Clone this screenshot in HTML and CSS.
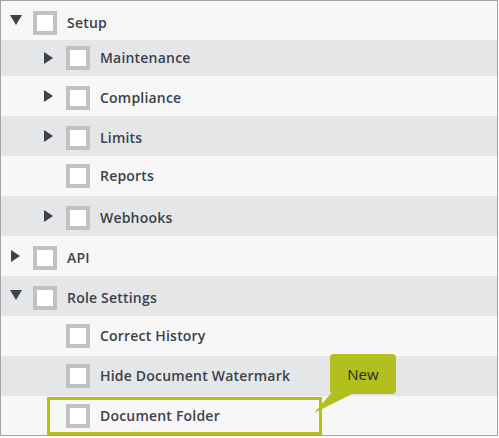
FILE: index.html
```html
<!DOCTYPE html>
<html lang="en">
<head>
<meta charset="utf-8">
<title>Permissions tree</title>
<link rel="stylesheet" href="styles.css">
</head>
<body>
<div class="tree">
  <div class="row top has-toggle">
    <span class="toggle open"></span><span class="check"></span><span class="label">Setup</span>
  </div>
  <div class="row alt lvl1 compact">
    <span class="toggle closed"></span><span class="check"></span><span class="label">Maintenance</span>
  </div>
  <div class="row lvl1 has-toggle">
    <span class="toggle closed"></span><span class="check"></span><span class="label">Compliance</span>
  </div>
  <div class="row alt lvl1 has-toggle">
    <span class="toggle closed"></span><span class="check"></span><span class="label">Limits</span>
  </div>
  <div class="row lvl1">
    <span class="toggle"></span><span class="check"></span><span class="label">Reports</span>
  </div>
  <div class="row alt lvl1 has-toggle">
    <span class="toggle closed"></span><span class="check"></span><span class="label">Webhooks</span>
  </div>
  <div class="row has-toggle">
    <span class="toggle closed"></span><span class="check"></span><span class="label">API</span>
  </div>
  <div class="row alt has-toggle">
    <span class="toggle open"></span><span class="check"></span><span class="label">Role Settings</span>
  </div>
  <div class="row lvl1">
    <span class="toggle"></span><span class="check"></span><span class="label">Correct History</span>
  </div>
  <div class="row alt lvl1">
    <span class="toggle"></span><span class="check"></span><span class="label">Hide Document Watermark</span>
  </div>
  <div class="row lvl1 bottom">
    <span class="toggle"></span><span class="check"></span><span class="label">Document Folder</span>
    <span class="highlight"></span>
  </div>
  <div class="callout">New</div>
</div>
</body>
</html>
```

FILE: styles.css
```css
* { box-sizing: border-box; }

html, body {
  margin: 0;
  background: #ffffff;
}

.tree {
  position: relative;
  width: 498px;
  border: 1px solid #a3a3a3;
  background: #f7f7f7;
  font-family: "Open Sans", "Liberation Sans", sans-serif;
}

.row {
  position: relative;
  display: flex;
  align-items: center;
  height: 40px;
  padding-left: 9px;
  background: #f7f7f7;
}

.row.alt { background: #e5e6e7; }
.row.top { height: 39px; }
.row.compact { height: 36px; }
.row.bottom { height: 39px; }
.row.lvl1 { padding-left: 42px; }
.row.has-toggle { padding-top: 4px; }

/* expand / collapse arrow slot; empty for leaf nodes */
.toggle {
  flex: 0 0 23px;
  height: 12px;
  position: relative;
}

.toggle.open::before,
.toggle.closed::before {
  content: "";
  position: absolute;
  left: 0;
  top: 0;
  width: 0;
  height: 0;
  border-style: solid;
}

.toggle.open { margin-bottom: 6px; }
.toggle.open::before {
  top: 1px;
  border-width: 10px 6px 0 6px;
  border-color: #3c424b transparent transparent transparent;
}

.toggle.closed { margin-bottom: 4px; }
.row.compact .toggle.closed { margin-bottom: 0; }
.toggle.closed::before {
  left: 1px;
  border-width: 6px 0 6px 9px;
  border-color: transparent transparent transparent #3c424b;
}

.check {
  flex: 0 0 24px;
  width: 24px;
  height: 24px;
  border: 4px solid #c1c1c3;
  background: #ffffff;
  margin-right: 10px;
}

.label {
  font-size: 14px;
  font-weight: 600;
  letter-spacing: 0.2px;
  color: #3b414d;
  line-height: 20px;
  white-space: nowrap;
}

.highlight {
  position: absolute;
  left: 46px;
  top: 1px;
  width: 275px;
  height: 38px;
  border: 3px solid #b5bf1f;
}

.callout {
  position: absolute;
  left: 329px;
  top: 353px;
  width: 66px;
  height: 40px;
  border-radius: 4px;
  background: #b3be1f;
  color: #2a2c14;
  font-family: "Open Sans", "Liberation Sans", sans-serif;
  font-size: 15px;
  line-height: 40px;
  text-align: center;
  padding-bottom: 2px;
}

.callout::after {
  content: "";
  position: absolute;
  left: -16px;
  top: 36px;
  width: 46px;
  height: 23px;
  background: #b3be1f;
  clip-path: polygon(20px 0, 46px 0, 0 23px);
}
```
